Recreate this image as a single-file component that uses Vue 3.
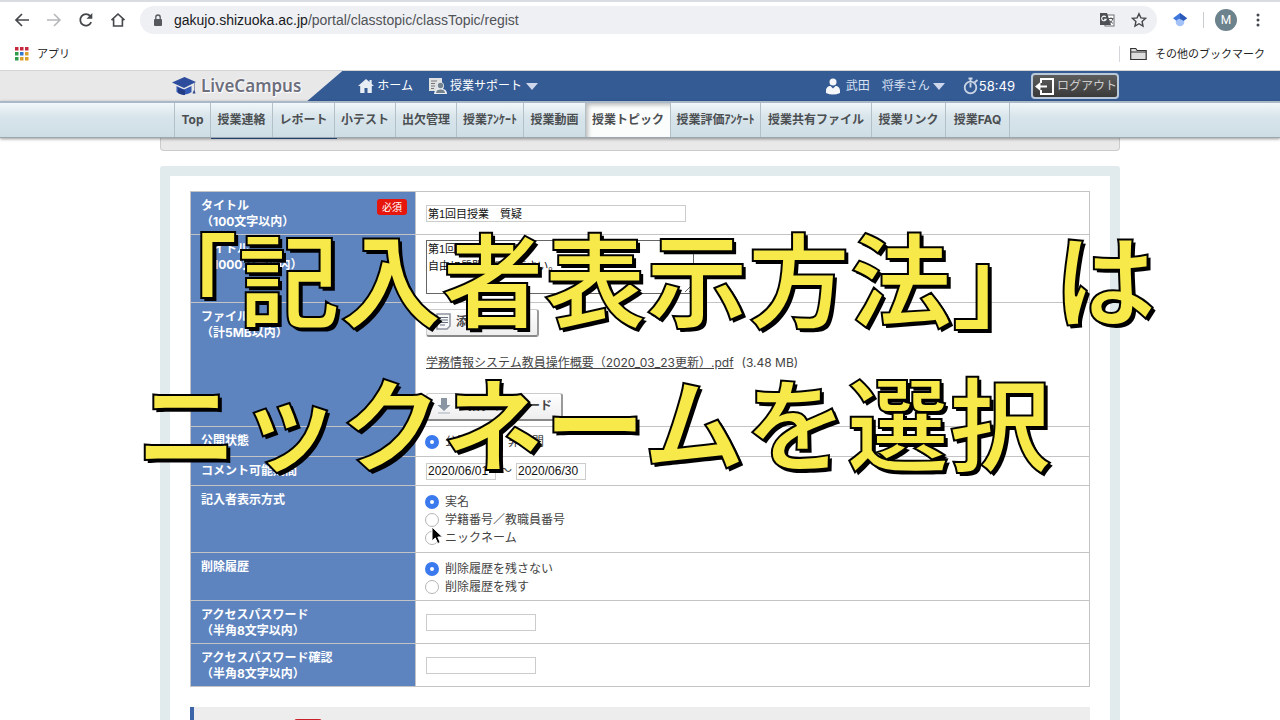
<script setup>
import { ref } from 'vue'

const tabs = [
  'Top', '授業連絡', 'レポート', '小テスト', '出欠管理', '授業ｱﾝｹｰﾄ', '授業動画',
  '授業トピック', '授業評価ｱﾝｹｰﾄ', '授業共有ファイル', '授業リンク', '授業FAQ'
]
const activeTab = '授業トピック'

const title = ref('第1回目授業　質疑')
const body = ref('第1回講義について\n自由に質問してください。')
const publish = ref('公開')
const from = ref('2020/06/01')
const to = ref('2020/06/30')
const author = ref('実名')
const history = ref('削除履歴を残さない')
const password = ref('')
const confirmPassword = ref('')

const authorOptions = ['実名', '学籍番号／教職員番号', 'ニックネーム']
const historyOptions = ['削除履歴を残さない', '削除履歴を残す']
</script>

<template>
  <div class="screen">
    <div class="browser">
      <div class="toolbar">
        <button class="tool" aria-label="戻る">
          <svg width="16" height="16" viewBox="0 0 16 16" fill="none" stroke="#44474b" stroke-width="1.7"><path d="M15 8H2.5M8 2 2 8l6 6" /></svg>
        </button>
        <button class="tool" aria-label="進む">
          <svg width="16" height="16" viewBox="0 0 16 16" fill="none" stroke="#b4b7ba" stroke-width="1.5"><path d="M1 8h12.5M8 2l6 6-6 6" /></svg>
        </button>
        <button class="tool" aria-label="再読み込み">
          <svg width="16" height="16" viewBox="0 0 16 16"><path d="M13.2 10.2A5.7 5.7 0 1 1 12.3 4.2" fill="none" stroke="#44474b" stroke-width="1.8" /><path d="M14.3 1v5.8H8.5z" fill="#44474b" /></svg>
        </button>
        <button class="tool" aria-label="ホームページ">
          <svg width="16" height="16" viewBox="0 0 16 16" fill="none" stroke="#44474b" stroke-width="1.6"><path d="M1.5 8.2 8 2l6.500 6.200M3.600 7v7h8.800V7" /></svg>
        </button>
        <div class="address">
          <svg width="10" height="13" viewBox="0 0 10 13"><rect x="1" y="5" width="8" height="7" rx="1" fill="#55585c" /><path d="M2.800 5V3.200a2.200 2.200 0 0 1 4.400 0V5" fill="none" stroke="#55585c" stroke-width="1.300" /></svg>
          <span class="url"><b>gakujo.shizuoka.ac.jp</b>/portal/classtopic/classTopic/regist</span>
          <button class="tool" aria-label="翻訳">
            <svg width="16" height="16" viewBox="0 0 16 16"><rect x="6" y="3" width="9" height="11" fill="#fff" stroke="#6b6e72" /><path d="M1 1h7l4 12H1z" fill="#4d5054" /><path d="M6.800 5A2.300 2.300 0 1 0 7.200 7.200H5" fill="none" stroke="#fff" stroke-width="1.100" /><path d="M9.500 6.500h5M12 5.300v1.200M10.500 8.500l3.500 3M13.600 7c-.4 2-1.600 3.500-3 4.500" stroke="#55585c" fill="none" /></svg>
          </button>
          <button class="tool" aria-label="ブックマークに追加">
            <svg width="16" height="16" viewBox="0 0 16 16"><path d="m8 1.700 1.900 4.200 4.600.5-3.400 3.100.9 4.500-4-2.300L4 14l.9-4.500-3.400-3.100 4.600-.5z" fill="none" stroke="#44474b" stroke-width="1.400" /></svg>
          </button>
        </div>
        <button class="tool ext" aria-label="拡張機能">
          <svg width="14" height="14" viewBox="0 0 14 14"><circle cx="7" cy="9" r="4.300" fill="#a4c2f8" /><path d="M0 5.200 7 0l7 5.200-3.300 2.600a4.500 4.500 0 0 0-7.400 0z" fill="#3f77dc" /><path d="M7 0l7 5.200-3.300 2.600L7 6z" fill="#2c5ab8" /></svg>
        </button>
        <i class="divider"></i>
        <button class="avatar" aria-label="プロフィール">M</button>
        <button class="tool" aria-label="メニュー">
          <svg width="4" height="14" viewBox="0 0 4 14" fill="#44474b"><circle cx="2" cy="2" r="1.500" /><circle cx="2" cy="7" r="1.500" /><circle cx="2" cy="12" r="1.500" /></svg>
        </button>
      </div>
      <div class="bookmarks">
        <a href="#" class="mark">
          <svg width="14" height="14" viewBox="0 0 14 14"><path d="M0 0h3.500v3.500H0zM5 0h3.500v3.500H5zM10 0h3.500v3.500H10z" fill="#c5283d" /><path d="M0 5h3.500v3.500H0zM0 10h3.500v3.500H0z" fill="#2e9a4b" /><path d="M5 5h3.500v3.500H5z" fill="#2f77d0" /><path d="M10 5h3.500v3.500H10zM5 10h3.500v3.500H5zM10 10h3.500v3.500H10z" fill="#d9a02c" /></svg>
          アプリ
        </a>
        <a href="#" class="mark others">
          <svg width="17" height="14" viewBox="0 0 17 14"><path d="M.7 12.500V1.500h5l1.500 2h9v9z" fill="#ddd" stroke="#333" stroke-width="1.200" /><path d="M1 5h15" stroke="#333" /></svg>
          その他のブックマーク
        </a>
      </div>
    </div>

    <header class="site">
      <div class="wrap bar">
        <div class="brand">
          <svg width="25" height="20" viewBox="0 0 25 20"><path d="M0 6.500 12.500 1 24 6 12 12z" fill="#2d4c9c" /><path d="M4.500 10v6c4 3 11 3.500 15 0v-6L12 13.500z" fill="#3459b4" /><path d="M6 12v5c2 1.500 5 2 7 2v-5z" fill="#233c86" /><path d="M22 7v7l-1.500 3.500h3L22.500 14V7z" fill="#34488a" /></svg>
          <span>LiveCampus</span>
        </div>
        <a href="#" class="item">
          <svg width="16" height="14" viewBox="0 0 16 14" fill="#e8edf5"><path d="M8 0 0 7h2.200v7h4.300V9h3v5h4.300V7H16l-2.300-2V1h-2.200v2z" /></svg>
          ホーム
        </a>
        <a href="#" class="item support">
          <svg width="18" height="16" viewBox="0 0 18 16"><path d="M0 0h13v13H0z" fill="#dfe1e3" /><path d="M2 3h6M2 5.500h4M2 8h4M2 10.500h3" stroke="#777" /><path d="M5 16c0-3 2-4.500 4-5-2-2.500-1-7 2.500-7s4.500 4.500 2.500 7c2.500.5 4 2 4 5z" fill="#e8edf3" /><circle cx="11.500" cy="7.500" r="2.700" fill="#75838f" /><path d="M7 15c0-2.500 2-3.500 4.500-3.500S16 12.500 16 15z" fill="#75838f" /></svg>
          授業サポート<i class="caret"></i>
        </a>
        <a href="#" class="item user">
          <svg width="16" height="17" viewBox="0 0 16 17" fill="#f5f7fa"><circle cx="8" cy="4" r="3.500" /><path d="M1 13c0-3.500 2-5 4.500-5L8 10.500 10.500 8c2.500 0 4.500 1.500 4.500 5v2q-7 3-14 0z" /></svg>
          武田　将季さん<i class="caret"></i>
        </a>
        <span class="clock">
          <svg width="16" height="18" viewBox="0 0 16 18" fill="none" stroke="#ccd6e6" stroke-width="1.800"><circle cx="7.500" cy="10.500" r="5.800" /><path d="M7.500 10.500V6M5.500 1.500h4M7.500 1.500V5M11.500 5.500l3-2.500" /></svg>58:49
        </span>
        <button class="logout">
          <svg width="19" height="17" viewBox="0 0 19 17" fill="none" stroke="#fff" stroke-width="2"><path d="M6 5V1h12v15H6v-4" /><path d="M4 8.500h8" /><path d="M0 8.500 5.500 4v9z" fill="#fff" stroke="none" /></svg>
          ログアウト
        </button>
      </div>
    </header>

    <nav class="tabs">
      <div class="wrap strip">
        <a v-for="t in tabs" :key="t" href="#" :class="{ active: t === activeTab }">{{ t }}</a>
      </div>
    </nav>

    <main class="wrap">
      <div class="crumb"><i></i></div>
      <section class="panel">
        <table>
          <tbody>
            <tr class="two">
              <th scope="row"><label for="title">タイトル<br>（100文字以内）</label><em>必須</em></th>
              <td><input id="title" v-model="title" type="text" class="wide"></td>
            </tr>
            <tr class="text">
              <th scope="row"><label for="body">タイトル<br>（1000文字以内）</label></th>
              <td><textarea id="body" v-model="body"></textarea></td>
            </tr>
            <tr class="file">
              <th scope="row">ファイル<br>（計5MB以内）</th>
              <td>
                <div class="files">
                  <button class="act">
                    <svg width="16" height="17" viewBox="0 0 16 17"><path d="M1 1h13v12l-3 3H1z" fill="#f8f9fb" stroke="#8c93a0" stroke-width="1.500" /><path d="M4 4.500h8M4 7h8M4 9.500h8M4 12h5" stroke="#69717e" /></svg>
                    添付ファイル
                  </button>
                  <p><a href="#">学務情報システム教員操作概要（2020_03_23更新）.pdf</a><span>(3.48 MB)</span></p>
                  <button class="act">
                    <svg width="16" height="18" viewBox="0 0 16 18"><path d="M5 1h6v7h3.500L8 14 1.500 8H5z" fill="#8995a3" /><path d="M2 16h12" stroke="#ccd1d7" stroke-width="2" /></svg>
                    一括ダウンロード
                  </button>
                </div>
              </td>
            </tr>
            <tr class="state">
              <th scope="row">公開状態</th>
              <td>
                <div class="inline">
                  <label><input v-model="publish" type="radio" name="publish" value="公開">公開</label>
                  <label><input v-model="publish" type="radio" name="publish" value="非公開">非公開</label>
                </div>
              </td>
            </tr>
            <tr class="period">
              <th scope="row">コメント可能期間</th>
              <td>
                <div class="dates">
                  <input v-model="from" type="text" aria-label="開始日">
                  <span>～</span>
                  <input v-model="to" type="text" aria-label="終了日">
                </div>
              </td>
            </tr>
            <tr class="author">
              <th scope="row">記入者表示方式</th>
              <td>
                <div class="stack">
                  <label v-for="o in authorOptions" :key="o"><input v-model="author" type="radio" name="author" :value="o">{{ o }}</label>
                </div>
              </td>
            </tr>
            <tr class="history">
              <th scope="row">削除履歴</th>
              <td>
                <div class="stack">
                  <label v-for="o in historyOptions" :key="o"><input v-model="history" type="radio" name="history" :value="o">{{ o }}</label>
                </div>
              </td>
            </tr>
            <tr class="two">
              <th scope="row"><label for="pw">アクセスパスワード<br>（半角8文字以内）</label></th>
              <td><input id="pw" v-model="password" type="password" class="short"></td>
            </tr>
            <tr class="two">
              <th scope="row"><label for="pw2">アクセスパスワード確認<br>（半角8文字以内）</label></th>
              <td><input id="pw2" v-model="confirmPassword" type="password" class="short"></td>
            </tr>
          </tbody>
        </table>
        <div class="note"><i></i></div>
      </section>
    </main>

    <svg class="pointer" width="13" height="20" viewBox="0 0 13 20"><path d="M1 1v14l3.300-3 2.400 5.500 2.500-1L6.800 11H11.500z" fill="#000" stroke="#fff" /></svg>
    <p class="caption">「記入者表示方法」は<br>ニックネームを選択</p>
  </div>
</template>

<style>
body {
  margin: 0;
  background: #fff;
}
</style>

<style scoped>
* {
  box-sizing: border-box;
}

.screen {
  position: relative;
  height: 100vh;
  overflow: hidden;
  background: #fff;
  color: #444;
  font: 12px/18px Inter, "Noto Sans CJK JP", sans-serif;
}

button {
  font: inherit;
  border: 0;
  padding: 0;
  background: none;
  cursor: pointer;
}

a {
  color: inherit;
  text-decoration: none;
}

svg {
  flex: none;
  display: block;
}

.wrap {
  width: 960px;
  margin: 0 auto;
}

.browser {
  border-top: 2px solid #d9dce1;
}

.toolbar {
  display: flex;
  align-items: center;
  gap: 16px;
  height: 36px;
  padding: 0 20px 0 14px;
}

.address {
  flex: 1;
  display: flex;
  align-items: center;
  gap: 16px;
  height: 28px;
  margin-left: -2px;
  padding: 0 10px 0 13px;
  border-radius: 14px;
  background: #eff0f4;
}

.url {
  flex: 1;
  margin-left: -5px;
  font: 14px/20px "Liberation Sans", sans-serif;
  color: #505357;
}

.url b {
  font-weight: 400;
  color: #17191c;
}

.divider {
  width: 1px;
  height: 16px;
  background: #c9ccd0;
  margin-right: -5px;
}

.avatar {
  width: 22px;
  height: 22px;
  margin-right: 3px;
  border-radius: 50%;
  background: #6c828d;
  color: #fff;
  font: 12px/22px Roboto, sans-serif;
}

.bookmarks {
  display: flex;
  align-items: center;
  justify-content: space-between;
  height: 33px;
  padding: 0 15px 1px;
  border-bottom: 1px solid #d2d4d6;
  font-size: 11px;
  color: #222;
}

.mark {
  display: flex;
  align-items: center;
  gap: 8px;
  height: 16px;
}

.others {
  border-left: 1px solid #d5d7da;
  padding-left: 10px;
}

.site {
  height: 30px;
  background: #355b95;
}

.bar {
  display: flex;
  align-items: center;
  height: 30px;
  color: #fff;
}

.brand {
  display: flex;
  align-items: center;
  align-self: stretch;
  gap: 4px;
  margin-left: calc(480px - 50vw);
  padding-left: calc(50vw - 468px);
  padding-right: 41px;
  background: #e8e8e8;
  clip-path: polygon(0 0, 100% 0, calc(100% - 35px) 100%, 0 100%);
  color: #6d6f7d;
  font: 600 17px/24px "Noto Sans", sans-serif;
  text-shadow: 0 0 2px #fff, 0 0 2px #fff, 1px 1px 1px #fff;
}

.item {
  display: flex;
  align-items: center;
  gap: 3px;
  margin-left: 16px;
}

.caret {
  margin-left: 1px;
  border: 6px solid transparent;
  border-top: 7px solid #ced7ec;
  border-bottom: 0;
}

.user {
  margin-left: auto;
  gap: 5px;
  color: #d9e2f2;
}

.user .caret {
  margin-left: -2px;
}

.clock {
  display: flex;
  align-items: center;
  margin-left: 18px;
  font-size: 13px;
}

.logout {
  display: flex;
  align-items: center;
  gap: 3px;
  width: 88px;
  height: 26px;
  margin: 0 1px 0 16px;
  padding-left: 2px;
  border: 2px solid #b9c9da;
  border-radius: 4px;
  background: linear-gradient(#5d5d5d, #3a3a3a);
  color: #ccc;
  white-space: nowrap;
}

.tabs {
  position: relative;
  z-index: 1;
  height: 37px;
  border-top: 2px solid #a9b9c7;
  border-bottom: 1px solid #9ba6ae;
  background: linear-gradient(#f1f7fa, #d8e5eb 40%, #cedde5);
  box-shadow: 0 1px 3px rgba(0, 0, 0, .4);
}

.strip {
  display: grid;
  grid-template-columns: 36px 62px 62px 61px 61px 67px 62px 85px 90px 111px 74px 65px;
  padding-left: 14px;
}

.strip a {
  height: 34px;
  border-left: 1px solid #b3c0c8;
  color: #4c4f52;
  font-weight: 700;
  line-height: 33px;
  text-align: center;
  white-space: nowrap;
}

.strip a:last-child {
  border-right: 1px solid #b3c0c8;
}

.strip .active {
  background: #fbfcfc;
  box-shadow: inset 3px 3px 4px -1px #bbb;
}

.crumb {
  height: 13px;
  border: 1px solid #ccc;
  border-top: 0;
  border-radius: 0 0 4px 4px;
  background: #e9e9e9;
}

.crumb i {
  display: block;
  width: 126px;
  height: 1px;
  margin-left: 50px;
  background: #2e568f;
}

.panel {
  margin-top: 15px;
  padding: 15px 20px;
  border: 10px solid #e1eaec;
  border-radius: 3px;
  background: #fff;
}

table {
  width: 100%;
  border-collapse: collapse;
  table-layout: fixed;
}

th,
td {
  border: 1px solid #c4c4c6;
  padding: 0 10px;
}

th {
  position: relative;
  width: 225px;
  padding: 6px 10px 4px;
  background: #5e84bf;
  color: #fff;
  font-weight: 700;
  line-height: 16px;
  text-align: left;
  vertical-align: top;
}

.two {
  height: 43px;
}

.text {
  height: 68px;
}

.text td {
  padding-bottom: 3px;
}

.file {
  height: 124px;
}

.state {
  height: 30px;
}

.period {
  height: 29px;
}

.author {
  height: 67px;
}

.history {
  height: 48px;
}

em {
  position: absolute;
  top: 7px;
  right: 8px;
  width: 30px;
  border-radius: 3px;
  background: #e6160c;
  font: 10px/16px "Noto Sans CJK JP", sans-serif;
  text-align: center;
}

input,
textarea {
  display: block;
  margin: 0;
  padding: 0 1px;
  border: 1px solid #ccc;
  background: #fff;
  color: #111;
  font: 11px/15px "Liberation Sans", "Noto Sans CJK JP", sans-serif;
}

input {
  height: 17px;
}

.wide {
  width: 260px;
}

.short {
  width: 110px;
}

textarea {
  width: 268px;
  height: 54px;
  border-color: #666;
  line-height: 17px;
}

.files {
  display: flex;
  flex-direction: column;
  align-items: flex-start;
}

.files p {
  margin: 17px 0 21px;
  white-space: nowrap;
}

.files p a {
  text-decoration: underline;
}

.files p span {
  margin-left: 8px;
}

.act {
  display: flex;
  align-items: center;
  gap: 4px;
  height: 28px;
  padding: 0 9px 1px;
  border: 1px solid #ccc;
  border-width: 1px 2px 2px 1px;
  border-color: #ccc #999 #888 #ccc;
  border-radius: 3px;
  background: linear-gradient(#fff, #eee);
  color: #444;
  font-weight: 700;
}

.inline {
  display: flex;
  gap: 20px;
}

label:has([type="radio"]) {
  display: flex;
  align-items: center;
  gap: 6px;
  line-height: 18px;
}

[type="radio"] {
  appearance: none;
  width: 14px;
  height: 14px;
  margin-left: -1px;
  padding: 0;
  border: 1px solid #b5b5b5;
  border-radius: 50%;
}

[type="radio"]:checked {
  border: 5px solid #3b79ee;
}

.dates {
  display: flex;
  align-items: center;
  gap: 4px;
}

.dates input {
  width: 70px;
  font-size: 12px;
}

.stack label {
  height: 18px;
}

.stack {
  padding-top: 2px;
}

.note {
  display: flex;
  height: 60px;
  margin-top: 20px;
  padding: 12px 0 0 100px;
  border-left: 4px solid #3c64a8;
  background: #ededed;
}

.note i {
  width: 28px;
  height: 16px;
  border-radius: 3px;
  background: #c8202a;
}

.pointer {
  position: absolute;
  top: 526px;
  left: 431px;
  z-index: 2;
}

.caption {
  position: absolute;
  top: 204px;
  left: 136px;
  z-index: 3;
  margin: 0;
  color: #f8e94a;
  font: 700 102px/144px "Noto Sans CJK JP", sans-serif;
  white-space: nowrap;
  -webkit-text-stroke: 2px #000;
  text-shadow: 3px 3px 0 #000;
  pointer-events: none;
}
</style>
